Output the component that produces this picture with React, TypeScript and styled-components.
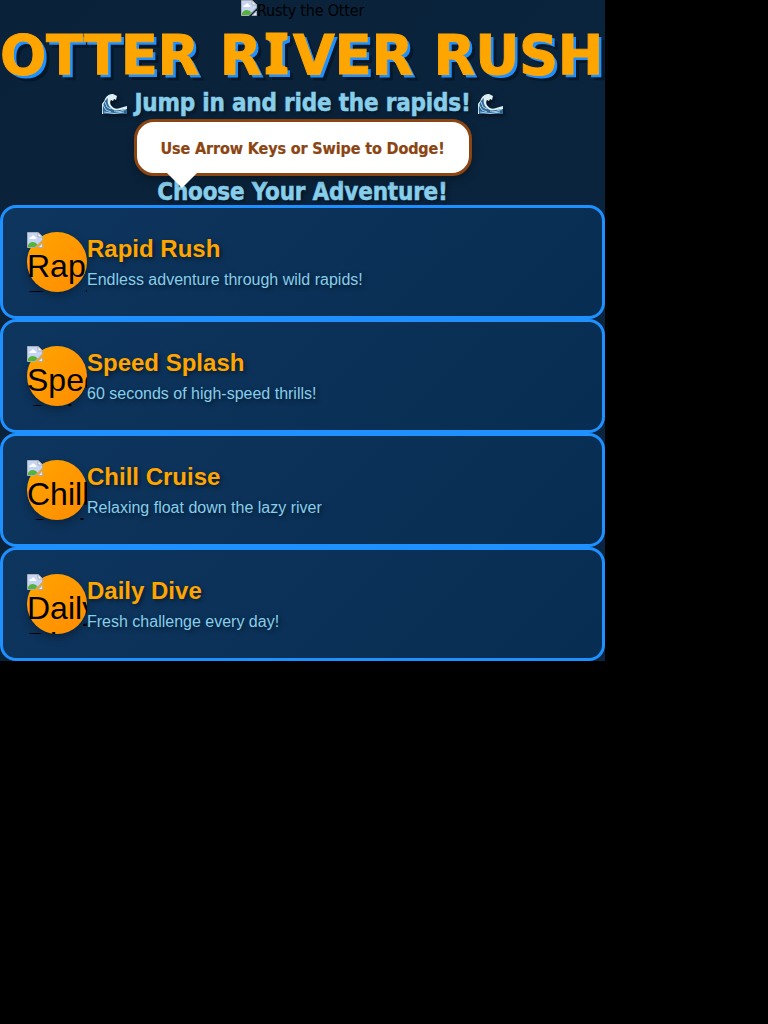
import React from 'react';
import styled, { createGlobalStyle } from 'styled-components';

const GlobalStyle = createGlobalStyle`
  * { box-sizing: border-box; margin: 0; padding: 0; }
  body { background: #000; }
`;

const displayFont = `'DejaVu Sans Condensed', 'DejaVu Sans', sans-serif`;
const bodyFont = `'Liberation Sans', Arial, sans-serif`;

const Menu = styled.main`
  display: flex;
  flex-direction: column;
  align-items: center;
  width: 605px;
  height: 661px;
  background: linear-gradient(135deg, #0a2239 0%, #0a2540 100%);
  font-family: ${displayFont};
`;

const Mascot = styled.div`
  display: flex;
  height: 20px;
  font-size: 16px;
  line-height: 22px;
  letter-spacing: -0.2px;
  color: #000;
`;

const BrokenIcon = styled.svg`
  display: block;
  flex: none;
  width: 16px;
  height: 16px;
`;

const Title = styled.h1`
  height: 68px;
  line-height: 71px;
  padding-right: 2px;
  font-family: 'DejaVu Sans', sans-serif;
  font-size: 54.5px;
  font-weight: 700;
  letter-spacing: -0.4px;
  word-spacing: 2px;
  white-space: nowrap;
  color: #ffa500;
  -webkit-text-stroke: 0.9px #ffa500;
  text-shadow: 3px 3px 0 #1e90ff, 6px 6px 0 rgba(0, 0, 0, 0.3);
`;

const SerifI = styled.span`
  display: inline-block;
  width: 31.6px;
  padding-left: 3px;
  line-height: 1;
  font-family: 'Noto Sans', sans-serif;
  font-size: 56px;
  font-weight: 900;
`;

const Heading = styled.h2<{ $height: number }>`
  display: flex;
  align-items: center;
  height: ${(p) => p.$height}px;
  line-height: 29px;
  padding-top: 2px;
  font-size: 24px;
  font-weight: 700;
  letter-spacing: -0.2px;
  white-space: nowrap;
  color: #87ceeb;
  -webkit-text-stroke: 0.5px #87ceeb;
  text-shadow: 2px 2px 4px rgba(0, 0, 0, 0.5);
`;

const WaveIcon = styled.svg`
  width: 25px;
  height: 22px;
  margin: 0 7px;
  filter: drop-shadow(2px 2px 2px rgba(0, 0, 0, 0.5));
`;

const Bubble = styled.div`
  position: relative;
  margin: 2px 0 1px;
  width: 338px;
  height: 57px;
  padding: 17px 0 17px 24px;
  line-height: 19px;
  border: 3px solid #8b4513;
  border-radius: 20px;
  background: #fff;
  color: #8b4513;
  font-size: 16px;
  font-weight: 700;
  letter-spacing: -0.13px;
  white-space: nowrap;
  -webkit-text-stroke: 0.2px #8b4513;
  box-shadow: 0 4px 8px rgba(0, 0, 0, 0.3);

  &::after {
    content: '';
    position: absolute;
    left: 30px;
    bottom: -15px;
    border: 15px solid transparent;
    border-bottom: 0;
    border-top-color: #fff;
  }
`;

const ModeCard = styled.button`
  display: flex;
  align-items: center;
  width: 605px;
  height: 114px;
  padding: 24px;
  border: 3px solid #1e90ff;
  border-radius: 16px;
  background: linear-gradient(135deg, #0e355e 0%, #082d52 100%);
  font-family: ${bodyFont};
  text-align: left;
`;

const ModeBadge = styled.span`
  flex: none;
  width: 60px;
  height: 60px;
  border-radius: 50%;
  background: linear-gradient(135deg, #ffa500, #ff8c00);
  box-shadow: 0 4px 8px rgba(0, 0, 0, 0.3);
  color: #000;
  font-size: 32px;
  line-height: 36px;
`;

const AltBox = styled.span`
  display: block;
  width: 60px;
  height: 60px;
  overflow: hidden;
`;

const ModeText = styled.span`
  display: flex;
  flex-direction: column;
  gap: 9px;
  text-shadow: 2px 2px 4px rgba(0, 0, 0, 0.5);
`;

const ModeName = styled.strong`
  color: #ffa500;
  font-size: 24px;
  line-height: 26px;
`;

const ModeDescription = styled.span`
  color: #87ceeb;
  font-size: 16px;
  line-height: 18px;
`;

const modes = [
  { name: 'Rapid Rush', description: 'Endless adventure through wild rapids!' },
  { name: 'Speed Splash', description: '60 seconds of high-speed thrills!' },
  { name: 'Chill Cruise', description: 'Relaxing float down the lazy river' },
  { name: 'Daily Dive', description: 'Fresh challenge every day!' },
];

const MissingImage = () => (
  <BrokenIcon viewBox="0 0 16 16" aria-hidden="true">
    <path d="M.5 .5H11L15.5 5V8L8 15.5H.5z" fill="#c6d5f3" stroke="#a9adb5" />
    <path d="M2.5 7C2 5.4 3.4 4.6 4.3 5C5 3 7.8 3.2 8.2 5.2C9.6 5 9.9 6.6 9 7z" fill="#fff" />
    <path d="M1 15V13C3 9.5 7 9 10.5 12.5L8 15z" fill="#55b33b" />
    <path d="M11 .5V5h4.5z" fill="#fff" stroke="#a9adb5" />
    <path d="M15.5 11V15.5H11z" fill="#e4e9f2" stroke="#a9adb5" />
  </BrokenIcon>
);

const Wave = () => (
  <WaveIcon viewBox="0 0 25 22" role="img" aria-label="wave">
    <path d="M0 21V11C1 9 2 9 3 6C5 2 8 1 11 1L15 3L14 7L12 6L11 8L9 7C7 10 9 13 12 15C16 17 20 14 25 13V21z" fill="#dceef2" />
    <path d="M1 19C0 12 3 7 6 5C5 9 6 13 10 16C15 19 20 16 25 16V21H1z" fill="#2c6799" />
    <path d="M1 12L4 17L9 19M3 9L5 14L9 16M12 18Q18 20 24 16M2 19Q12 22 22 19" fill="none" stroke="#b9dcea" strokeWidth=".9" />
  </WaveIcon>
);

export default function App() {
  return (
    <>
      <GlobalStyle />
      <Menu>
        <Mascot><MissingImage />Rusty the Otter</Mascot>
        <Title>OTTER R<SerifI>I</SerifI>VER RUSH</Title>
        <Heading $height={29}><Wave />Jump in and ride the rapids!<Wave /></Heading>
        <Bubble>Use Arrow Keys or Swipe to Dodge!</Bubble>
        <Heading $height={28}>Choose Your Adventure!</Heading>
        {modes.map((mode) => (
          <ModeCard key={mode.name}>
            <ModeBadge><AltBox><MissingImage />{mode.name}</AltBox></ModeBadge>
            <ModeText>
              <ModeName>{mode.name}</ModeName>
              <ModeDescription>{mode.description}</ModeDescription>
            </ModeText>
          </ModeCard>
        ))}
      </Menu>
    </>
  );
}
